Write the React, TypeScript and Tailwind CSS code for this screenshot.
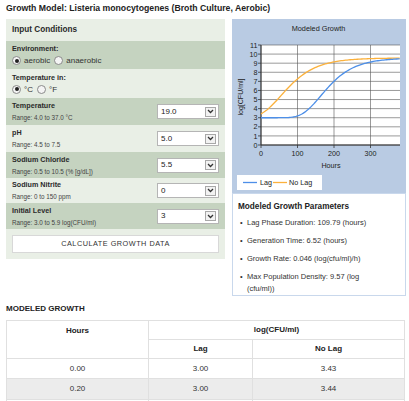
import React from "react";

const PX_H = 0.365;
const PX_V = 100 / 11;
const L = 29;
const B = 126;
const FF = "Liberation Sans, Arial, sans-serif";

function gomp(t: number, c: number, s: number) {
  return Math.exp(-Math.exp(-(t - c) / s));
}
function curve(fn: (t: number) => number) {
  const pts: string[] = [];
  for (let t = 0; t <= 381; t += 4) {
    const x = L + t * PX_H;
    const y = B - fn(t) * PX_V;
    pts.push(`${x.toFixed(2)},${y.toFixed(2)}`);
  }
  return pts.join(" ");
}
const lag = (t: number) => 3 + 6.57 * gomp(t, 164, 51.1);
const noLag = (t: number) => 3 + 6.57 * gomp(t, 54.4, 54.1);

function Chart() {
  const yTicks = Array.from({ length: 12 }, (_, i) => i);
  const xTicks = [0, 100, 200, 300];
  return (
    <svg width={174} height={174} className="block">
      <rect x={0} y={0} width={174} height={174} fill="#b9cbe3" />
      <text x={86.5} y={12} fontSize={7.3} textAnchor="middle" fill="#222" fontFamily={FF}>
        Modeled Growth
      </text>
      <rect x={L} y={26} width={139} height={100} fill="#ffffff" />
      {yTicks.map((v) => {
        const y = B - v * PX_V;
        return (
          <g key={v}>
            <line x1={L} x2={168} y1={y} y2={y} stroke="#555" strokeWidth={0.6} />
            <line x1={L - 3} x2={L} y1={y} y2={y} stroke="#333" strokeWidth={0.8} />
            <text x={L - 3.5} y={y + 2.6} fontSize={7.2} textAnchor="end" fill="#222" fontFamily={FF}>
              {v}
            </text>
          </g>
        );
      })}
      {xTicks.map((h) => {
        const x = L + h * PX_H;
        return (
          <g key={h}>
            <line x1={x} x2={x} y1={26} y2={B} stroke="#555" strokeWidth={0.6} />
            <line x1={x} x2={x} y1={B} y2={B + 3} stroke="#333" strokeWidth={0.8} />
            <text x={x} y={B + 11} fontSize={7.2} textAnchor="middle" fill="#222" fontFamily={FF}>
              {h}
            </text>
          </g>
        );
      })}
      <line x1={L} x2={L} y1={26} y2={B} stroke="#333" strokeWidth={1} />
      <line x1={L} x2={168} y1={B} y2={B} stroke="#333" strokeWidth={1} />
      <polyline points={curve(noLag)} fill="none" stroke="#fbb13c" strokeWidth={1.3} />
      <polyline points={curve(lag)} fill="none" stroke="#4d8fe8" strokeWidth={1.3} />
      <text x={99} y={148.5} fontSize={7.2} textAnchor="middle" fill="#222" fontFamily={FF}>
        Hours
      </text>
      <text
        x={0}
        y={0}
        fontSize={7}
        textAnchor="middle"
        fill="#222"
        fontFamily={FF}
        transform="translate(10.5 78) rotate(-90)"
      >
        log[CFU/ml]
      </text>
      <rect x={5} y={156} width={85} height={15} fill="#ffffff" />
      <line x1={11} x2={25} y1={163.5} y2={163.5} stroke="#4d8fe8" strokeWidth={1.3} />
      <text x={28} y={166} fontSize={7.2} fill="#222" fontFamily={FF}>
        Lag
      </text>
      <line x1={41} x2={55} y1={163.5} y2={163.5} stroke="#fbb13c" strokeWidth={1.3} />
      <text x={57} y={166} fontSize={7.2} fill="#222" fontFamily={FF}>
        No Lag
      </text>
    </svg>
  );
}

function Radio({ checked, label }: { checked: boolean; label: string }) {
  return (
    <span className="flex items-center gap-[3px] mr-[4px]">
      <span className="w-[9px] h-[9px] rounded-full border border-[#8a8a8a] bg-[#f4f4f4] flex items-center justify-center">
        {checked && <span className="w-[4px] h-[4px] rounded-full bg-[#222]" />}
      </span>
      <span>{label}</span>
    </span>
  );
}

function Select({ value }: { value: string }) {
  return (
    <div className="w-[62px] h-[15px] bg-white border border-[#b5b5b5] flex items-center justify-between pl-[3px] pr-[2px]">
      <span className="text-[8px] text-[#222]">{value}</span>
      <span className="w-[11px] h-[10px] border border-[#a8a8a8] bg-[#f2f2f2] flex items-center justify-center">
        <svg width="7" height="5" viewBox="0 0 7 5">
          <path d="M1 1 L3.5 3.5 L6 1" fill="none" stroke="#333" strokeWidth="1.3" />
        </svg>
      </span>
    </div>
  );
}

function InputRow({
  label,
  range,
  value,
  dark,
  h,
}: {
  label: string;
  range: string;
  value: string;
  dark: boolean;
  h: string;
}) {
  return (
    <div className={`${dark ? "bg-[#c5d3c0]" : "bg-[#e9efe6]"} ${h} flex items-center justify-between pl-[6px] pr-[6px]`}>
      <div className="flex flex-col">
        <span className="text-[7.2px] font-bold text-[#2a2a2a] leading-[10px]">{label}</span>
        <span className="text-[6.3px] text-[#444] leading-[9px] mt-[2px]">{range}</span>
      </div>
      <Select value={value} />
    </div>
  );
}

export default function App() {
  return (
    <div className="w-[409px] h-[401px] overflow-hidden bg-white font-['Liberation_Sans',Arial,sans-serif] text-[#222]">
      <div className="h-[19px] pl-[6px] pt-[3px] text-[8.7px] font-bold leading-[11px] whitespace-nowrap">
        Growth Model: Listeria monocytogenes (Broth Culture, Aerobic)
      </div>
      <div className="flex pl-[6px] gap-[7px]">
        <div className="w-[219px] h-[240px] bg-[#e9efe6] flex flex-col">
          <div className="h-[22px] flex items-center pl-[6px] text-[8.2px] font-bold text-[#2a2a2a]">Input Conditions</div>
          <div className="h-[28px] bg-[#c5d3c0] pl-[6px] flex flex-col justify-center">
            <span className="text-[7.2px] font-bold leading-[10px] text-[#2a2a2a]">Environment:</span>
            <div className="flex items-center text-[8px] text-[#333] leading-[11px] mt-[1px]">
              <Radio checked label="aerobic" />
              <Radio checked={false} label="anaerobic" />
            </div>
          </div>
          <div className="h-[29px] pl-[6px] flex flex-col justify-center">
            <span className="text-[7.2px] font-bold leading-[10px] text-[#2a2a2a]">Temperature in:</span>
            <div className="flex items-center text-[8px] text-[#333] leading-[11px] mt-[1px]">
              <Radio checked label="°C" />
              <Radio checked={false} label="°F" />
            </div>
          </div>
          <InputRow dark h="h-[27px]" label="Temperature" range="Range: 4.0 to 37.0 °C" value="19.0" />
          <InputRow dark={false} h="h-[27px]" label="pH" range="Range: 4.5 to 7.5" value="5.0" />
          <InputRow dark h="h-[26px]" label="Sodium Chloride" range="Range: 0.5 to 10.5 (% [g/dL])" value="5.5" />
          <InputRow dark={false} h="h-[25px]" label="Sodium Nitrite" range="Range: 0 to 150 ppm" value="0" />
          <InputRow dark h="h-[26px]" label="Initial Level" range="Range: 3.0 to 5.9 log(CFU/ml)" value="3" />
          <div className="px-[6px] pt-[6px]">
            <div className="h-[18px] bg-white border border-[#d8d8d8] flex items-center justify-center text-[7.3px] tracking-[0.5px] text-[#333]">
              CALCULATE GROWTH DATA
            </div>
          </div>
        </div>
        <div className="w-[174px] flex flex-col">
          <Chart />
          <div className="h-[103px] border border-[#c9d8ec] pl-[5px] pt-[7px]">
            <div className="text-[8.2px] font-bold text-[#222] leading-[11px]">Modeled Growth Parameters</div>
            <ul className="mt-[5px] text-[7.5px] text-[#333] leading-[12px]">
              <li className="flex mb-[6px]"><span className="w-[9px] pl-[2px]">•</span><span>Lag Phase Duration: 109.79 (hours)</span></li>
              <li className="flex mb-[6px]"><span className="w-[9px] pl-[2px]">•</span><span>Generation Time: 6.52 (hours)</span></li>
              <li className="flex mb-[6px]"><span className="w-[9px] pl-[2px]">•</span><span>Growth Rate: 0.046 (log(cfu/ml)/h)</span></li>
              <li className="flex"><span className="w-[9px] pl-[2px]">•</span><span className="w-[132px]">Max Population Density: 9.57 (log (cfu/ml))</span></li>
            </ul>
          </div>
        </div>
      </div>
      <div className="pl-[6px] mt-[7px] text-[8px] font-bold leading-[11px]">MODELED GROWTH</div>
      <div className="ml-[6px] mt-[6px] w-[399px]">
        <table className="w-full border-collapse text-[8px] text-[#333] table-fixed">
          <colgroup>
            <col className="w-[142px]" />
            <col className="w-[104px]" />
            <col />
          </colgroup>
          <thead>
            <tr className="h-[19px]">
              <th rowSpan={2} className="border border-[#e0e0e0] font-bold align-top pt-[4px] text-[#222]">Hours</th>
              <th colSpan={2} className="border border-[#e0e0e0] font-bold text-[#222]">log(CFU/ml)</th>
            </tr>
            <tr className="h-[19px]">
              <th className="border border-[#e0e0e0] font-bold text-[#222]">Lag</th>
              <th className="border border-[#e0e0e0] font-bold text-[#222]">No Lag</th>
            </tr>
          </thead>
          <tbody>
            <tr className="h-[20px]">
              <td className="border border-[#e0e0e0] text-center">0.00</td>
              <td className="border border-[#e0e0e0] text-center">3.00</td>
              <td className="border border-[#e0e0e0] text-center">3.43</td>
            </tr>
            <tr className="h-[21px] bg-[#ececec]">
              <td className="border border-[#e0e0e0] text-center">0.20</td>
              <td className="border border-[#e0e0e0] text-center">3.00</td>
              <td className="border border-[#e0e0e0] text-center">3.44</td>
            </tr>
            <tr className="h-[20px]">
              <td className="border border-[#e0e0e0]"></td>
              <td className="border border-[#e0e0e0]"></td>
              <td className="border border-[#e0e0e0]"></td>
            </tr>
          </tbody>
        </table>
      </div>
    </div>
  );
}
